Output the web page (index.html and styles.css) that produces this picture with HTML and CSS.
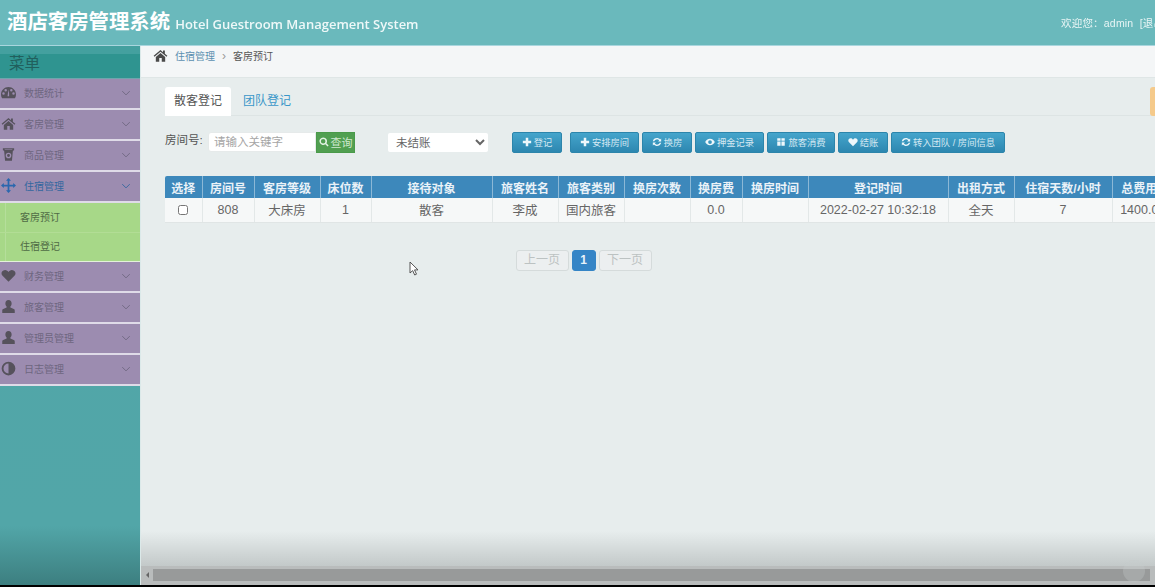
FILE: index.html
```html
<!DOCTYPE html>
<html lang="zh">
<head>
<meta charset="utf-8">
<title>酒店客房管理系统</title>
<link rel="stylesheet" href="styles.css">
</head>
<body>
<svg class="defs" width="0" height="0" aria-hidden="true">
  <symbol id="i-home" viewBox="0 0 24 24"><path d="M12 3 1 12.500l1.400 1.600L12 6l9.600 8.100 1.400-1.600-4-3.400V4h-3v2.600zM4.500 14.500V22h5.500v-6h4v6h5.500v-7.500L12 8z"/></symbol>
  <symbol id="i-gauge" viewBox="0 0 24 24"><path fill-rule="evenodd" d="M12 3C5.400 3 0 8.400 0 15c0 2.300.6 4.300 1.700 6h20.600c1.100-1.700 1.700-3.700 1.700-6 0-6.600-5.400-12-12-12zM4 15.500a2 2 0 1 1 0-4 2 2 0 0 1 0 4zm3.500-5a2 2 0 1 1 0-4 2 2 0 0 1 0 4zM13 18h-2.500l.5-4 1-7 1 7zm3.500-7.500a2 2 0 1 1 0-4 2 2 0 0 1 0 4zm3.500 5a2 2 0 1 1 0-4 2 2 0 0 1 0 4z"/></symbol>
  <symbol id="i-cup" viewBox="0 0 24 24"><path fill-rule="evenodd" d="M3 2h18v3l-2 1-1.500 16h-11L5 6 3 5zm9 7a4.500 4.500 0 1 0 0 9 4.500 4.500 0 0 0 0-9zm0 2.200a2.300 2.300 0 1 1 0 4.600 2.300 2.300 0 0 1 0-4.600zM6 3.500v1h12v-1z"/></symbol>
  <symbol id="i-move" viewBox="0 0 24 24"><path d="M12 0l4 4.500h-2.600v6.100h6.100V8l4.500 4-4.500 4v-2.600h-6.100v6.100H16L12 24l-4-4.500h2.600v-6.100H4.500V16L0 12l4.500-4v2.600h6.100V4.500H8z"/></symbol>
  <symbol id="i-heart" viewBox="0 0 24 24"><path d="M12 22 2.500 12.500C-.5 9.500.2 3.500 6.500 3 9 3 11 4.500 12 6.500 13 4.500 15 3 17.500 3c6.300.5 7 6.500 4 9.500z"/></symbol>
  <symbol id="i-user" viewBox="0 0 24 24"><path d="M12 1.500c-3.200 0-5 2.500-5 5.500 0 2 .8 3.800 2 4.900V13.500L3.500 16c-1.300.6-1.500 1.700-1.500 3v3.500h20V19c0-1.300-.2-2.400-1.500-3L15 13.500v-1.600c1.200-1.100 2-2.900 2-4.900 0-3-1.800-5.500-5-5.500z"/></symbol>
  <symbol id="i-adjust" viewBox="0 0 24 24"><path fill-rule="evenodd" d="M12 1a11 11 0 1 0 0 22 11 11 0 0 0 0-22zm0 3v16a8 8 0 0 1 0-16z"/></symbol>
  <symbol id="i-plus" viewBox="0 0 24 24"><path d="M9 2h6v7h7v6h-7v7H9v-7H2V9h7z"/></symbol>
  <symbol id="i-refresh" viewBox="0 0 24 24"><path d="M12 2.500c3 0 5.600 1.300 7.400 3.400L22 3.500V11h-7.500l2.700-2.700A7 7 0 0 0 5.300 10H1.900A10.400 10.400 0 0 1 12 2.500zM2 13h7.500l-2.700 2.700A7 7 0 0 0 18.700 14h3.400A10.400 10.400 0 0 1 4.600 18.100L2 20.500z"/></symbol>
  <symbol id="i-eye" viewBox="0 0 24 24"><path fill-rule="evenodd" d="M12 4C6.500 4 2.500 8 .5 12c2 4 6 8 11.500 8s9.500-4 11.500-8c-2-4-6-8-11.500-8zm0 3.500a4.500 4.500 0 1 1 0 9 4.500 4.500 0 0 1 0-9z"/></symbol>
  <symbol id="i-gift" viewBox="0 0 24 24"><path d="M3 3h8v6H3zM13 3h8v6h-8zM3 11h8v10H3zM13 11h8v10h-8z"/></symbol>
  <symbol id="i-search" viewBox="0 0 24 24"><path fill-rule="evenodd" d="M10 1a9 9 0 1 0 5.200 16.400l5.300 5.300 2.600-2.600-5.300-5.300A9 9 0 0 0 10 1zm0 3.500a5.500 5.500 0 1 1 0 11 5.500 5.500 0 0 1 0-11z"/></symbol>
  <symbol id="i-chev" viewBox="0 0 12 8"><path d="M1 1.500 6 6.500 11 1.500" fill="none" stroke="currentColor" stroke-width="1.200"/></symbol>
</svg>

<div class="page">
  <header class="topbar">
    <h1 class="brand">酒店客房管理系统</h1>
    <span class="brand-en">Hotel Guestroom Management System</span>
    <div class="user">欢迎您：admin &nbsp;[退出]</div>
  </header>

  <div class="body">
    <aside class="sidebar">
      <div class="menu-title"><span>菜单</span></div>
      <nav class="menu">
        <a class="item"><svg class="ico"><use href="#i-gauge"/></svg><span>数据统计</span><svg class="chev"><use href="#i-chev"/></svg></a>
        <a class="item"><svg class="ico"><use href="#i-home"/></svg><span>客房管理</span><svg class="chev"><use href="#i-chev"/></svg></a>
        <a class="item"><svg class="ico"><use href="#i-cup"/></svg><span>商品管理</span><svg class="chev"><use href="#i-chev"/></svg></a>
        <a class="item active"><svg class="ico"><use href="#i-move"/></svg><span>住宿管理</span><svg class="chev"><use href="#i-chev"/></svg></a>
        <div class="sub">
          <a class="sub-item">客房预订</a>
          <a class="sub-item">住宿登记</a>
        </div>
        <a class="item"><svg class="ico"><use href="#i-heart"/></svg><span>财务管理</span><svg class="chev"><use href="#i-chev"/></svg></a>
        <a class="item"><svg class="ico"><use href="#i-user"/></svg><span>旅客管理</span><svg class="chev"><use href="#i-chev"/></svg></a>
        <a class="item"><svg class="ico"><use href="#i-user"/></svg><span>管理员管理</span><svg class="chev"><use href="#i-chev"/></svg></a>
        <a class="item"><svg class="ico"><use href="#i-adjust"/></svg><span>日志管理</span><svg class="chev"><use href="#i-chev"/></svg></a>
      </nav>
    </aside>

    <main class="main">
      <div class="crumbs">
        <svg class="crumb-home"><use href="#i-home"/></svg>
        <a class="crumb-link">住宿管理</a>
        <span class="crumb-sep">›</span>
        <span class="crumb-cur">客房预订</span>
      </div>

      <div class="content">
        <div class="tabs">
          <a class="tab on">散客登记</a>
          <a class="tab">团队登记</a>
          <span class="tab-flag"></span>
        </div>

        <div class="toolbar">
          <label class="lbl">房间号:</label>
          <div class="search">
            <input class="kw" type="text" placeholder="请输入关键字">
            <button class="go"><svg class="bi"><use href="#i-search"/></svg>查询</button>
          </div>
          <select class="sel"><option>未结账</option></select>
          <div class="actions">
            <button class="btn first"><svg class="bi"><use href="#i-plus"/></svg>登记</button>
            <button class="btn w69"><svg class="bi"><use href="#i-plus"/></svg>安排房间</button>
            <button class="btn"><svg class="bi"><use href="#i-refresh"/></svg>换房</button>
            <button class="btn w69"><svg class="bi"><use href="#i-eye"/></svg>押金记录</button>
            <button class="btn w68"><svg class="bi"><use href="#i-gift"/></svg>旅客消费</button>
            <button class="btn"><svg class="bi"><use href="#i-heart"/></svg>结账</button>
            <button class="btn w114"><svg class="bi"><use href="#i-refresh"/></svg>转入团队 / 房间信息</button>
          </div>
        </div>

        <div class="table-wrap">
          <table class="grid">
            <colgroup>
              <col class="c37"><col class="c52"><col class="c66"><col class="c51"><col class="c121"><col class="c66"><col class="c66"><col class="c66"><col class="c52"><col class="c66"><col class="c140"><col class="c66"><col class="c98"><col class="c54">
            </colgroup>
            <thead>
              <tr><th>选择</th><th>房间号</th><th>客房等级</th><th>床位数</th><th>接待对象</th><th>旅客姓名</th><th>旅客类别</th><th>换房次数</th><th>换房费</th><th>换房时间</th><th>登记时间</th><th>出租方式</th><th>住宿天数/小时</th><th>总费用</th></tr>
            </thead>
            <tbody>
              <tr><td><input class="chk" type="checkbox"></td><td>808</td><td>大床房</td><td>1</td><td>散客</td><td>李成</td><td>国内旅客</td><td></td><td>0.0</td><td></td><td>2022-02-27 10:32:18</td><td>全天</td><td>7</td><td>1400.0</td></tr>
            </tbody>
          </table>
        </div>

        <div class="pager">
          <a class="pg">上一页</a>
          <a class="pg cur">1</a>
          <a class="pg">下一页</a>
        </div>

        <svg class="cursor" viewBox="0 0 10 15"><path d="M1 1v11l2.700-2.400 2 4.400 1.800-.8-2-4.300H9z" fill="#fff" stroke="#444" stroke-width=".9"/></svg>
      </div>

      <div class="hscroll">
        <span class="arrow"></span>
        <span class="thumb"></span>
        <span class="knob"></span>
      </div>
    </main>
  </div>
  <div class="strip"></div>
</div>
</body>
</html>
```

FILE: styles.css
```css
* { box-sizing: border-box; }
html, body { margin: 0; height: 100%; overflow: hidden; background: #000; }
body { font-family: "Liberation Sans", "Noto Sans CJK SC", sans-serif; color: #555; }
.defs { position: absolute; }
.page { width: 1155px; height: 587px; display: flex; flex-direction: column; overflow: hidden; filter: blur(.35px); }

/* top bar */
.topbar { height: 46px; flex: none; display: flex; align-items: center; background: #6ab9bc; color: #fff; padding: 0 0 2px 7px; border-bottom: 1px solid #a9d6de; }
.brand { margin: 0; font-size: 20.400px; line-height: 42px; font-weight: 700; white-space: nowrap; }
.brand-en { margin-left: 5px; font-family: "Open Sans", sans-serif; font-size: 13px; font-weight: 600; color: #eef8f8; white-space: nowrap; position: relative; top: 2px; }
.user { margin-left: auto; width: 94px; overflow: hidden; white-space: nowrap; font-size: 10.500px; color: #e8f5f5; letter-spacing: .2px; position: relative; top: 1px; }

.body { flex: 1; min-height: 0; display: flex; }

/* sidebar */
.sidebar { width: 141px; flex: none; background: linear-gradient(#50a6a8 0, #52a6a8 480px, #3c7e7f 540px); border-right: 1px solid #dbe9e9; }
.menu-title { height: 33px; padding-top: 8px; background: linear-gradient(#44a09f 0 8px, #2f9490 8px); border-bottom: 1px solid #6fa5ad; font-size: 15.500px; color: #215f5d; }
.menu-title span { display: block; padding-left: 9px; line-height: 19px; }
.menu { display: flex; flex-direction: column; }
.item { height: 31px; padding-bottom: 2px; display: flex; align-items: center; background: #9c8cb0; border-bottom: 2px solid #dfdbe8; color: #6e6680; font-size: 10px; }
.item span { margin-left: 8px; }
.ico { width: 15px; height: 15px; margin-left: 1px; fill: #56525c; flex: none; }
.chev { width: 10px; height: 6px; margin-left: auto; margin-right: 9px; color: #6e6680; flex: none; }
.item.active { color: #33679f; }
.item.active .ico { fill: #2a67ae; }
.item.active .chev { color: #33679f; }
.sub { height: 59px; display: flex; flex-direction: column; background: linear-gradient(90deg, transparent 5px, #b5de9b 5px 6px, transparent 6px), #a7d888; border-bottom: 1px solid #e4f2da; }
.sub-item { height: 29px; line-height: 29px; padding-left: 20px; font-size: 10px; color: #4f6b45; }
.sub-item + .sub-item { border-top: 1px solid #b2dd95; line-height: 27px; }

/* main */
.main { flex: 1; min-width: 0; display: flex; flex-direction: column; background: linear-gradient(#e7eded 0, #e7eded 485px, #c3c9c9 520px); }
.crumbs { height: 32px; flex: none; display: flex; align-items: center; padding: 0 0 12px 12px; background: #f4f6f7; border-bottom: 1px solid #dfe6e6; font-size: 10px; }
.crumb-home { width: 15px; height: 15px; fill: #4a4a4a; }
.crumb-link { margin-left: 7px; color: #5b8fb0; }
.crumb-sep { margin: 0 7px; color: #999; font-size: 12px; line-height: 10px; }
.crumb-cur { color: #555; }

.content { flex: 1; min-height: 0; position: relative; padding: 9px 0 0 24px; overflow: hidden; }
.tabs { height: 29px; display: flex; position: relative; border-bottom: 1px solid #dde4e4; }
.tab { height: 29px; padding: 0 9px; margin-right: 3px; line-height: 29px; font-size: 12px; color: #3a97c9; }
.tab.on { width: 66px; background: #fff; color: #555; border-radius: 3px 3px 0 0; }
.tab-flag { position: absolute; right: 0; top: 0; width: 5px; height: 29px; background: #f5ca8b; border-radius: 3px 0 0 3px; }

.toolbar { height: 21px; margin-top: 16px; display: flex; align-items: flex-start; }
.lbl { width: 43px; font-size: 11.500px; line-height: 16px; color: #555; }
.search { display: flex; width: 147px; }
.kw { width: 108px; height: 20px; padding: 0 5px; border: 1px solid #e6eaea; border-radius: 3px 0 0 3px; background: #fff; font: 11.500px "Liberation Sans", "Noto Sans CJK SC", sans-serif; outline: 0; }
.kw::placeholder { color: #a5a5a5; opacity: 1; }
.go { width: 39px; height: 21px; padding: 0 0 2px; display: flex; align-items: center; justify-content: center; gap: 2px; border: 1px solid #4a9a4a; background: #519f51; color: #cfe8cf; font: 11px "Liberation Sans", "Noto Sans CJK SC", sans-serif; }
.sel { width: 100px; height: 19px; margin: 1px 0 0 33px; padding: 0 4px; border: 0; border-radius: 2px; background: #fff; color: #666; font: 11.500px "Liberation Sans", "Noto Sans CJK SC", sans-serif; outline: 0; }
.actions { display: flex; margin-left: 24px; gap: 3px; }
.btn { width: 50px; height: 21px; padding: 0 0 1px; display: flex; align-items: center; justify-content: center; gap: 2px; border: 1px solid #2c85ab; border-radius: 2px; background: linear-gradient(#45a5cc, #2d87b0); color: #d4e8f2; font: 9.300px "Liberation Sans", "Noto Sans CJK SC", sans-serif; white-space: nowrap; }
.btn.first { margin-right: 5px; }
.btn.w69 { width: 69px; }
.btn.w68 { width: 68px; }
.btn.w114 { width: 114px; }
.bi { width: 10px; height: 10px; fill: #eef7fb; flex: none; }
.go .bi { fill: #e4f3e4; }

.table-wrap { margin-top: 23px; overflow: hidden; }
.grid { width: 1001px; table-layout: fixed; border-collapse: collapse; font-size: 12px; }
.c37 { width: 37px; } .c51 { width: 51px; } .c52 { width: 52px; } .c54 { width: 54px; } .c66 { width: 66px; } .c98 { width: 98px; } .c121 { width: 121px; } .c140 { width: 140px; }
.grid th { height: 22px; padding: 0; background: #3d88bb; color: #eaf2f8; font-weight: 700; border-left: 1px solid #8cb8d6; white-space: nowrap; }
.grid th:first-child { border-left: 0; border-radius: 2px 0 0 0; }
.grid td { height: 24px; padding: 0; background: #f6f8f8; color: #666; font-size: 12.500px; text-align: center; border-left: 1px solid #e3e8e8; border-bottom: 1px solid #e0e5e5; white-space: nowrap; }
.grid td:first-child { border-left: 0; }
.chk { width: 10px; height: 10px; margin: 0; vertical-align: middle; }

.pager { display: flex; justify-content: center; gap: 3px; margin-top: 27px; width: 837px; }
.pg { width: 53px; height: 21px; line-height: 19px; text-align: center; font-size: 12px; color: #bcc2c2; border: 1px solid #d5dbdb; border-radius: 3px; background: #eceff0; }
.pg.cur { width: 24px; background: #3585c6; border-color: #3585c6; color: #e8f2fa; font-weight: 700; }

.cursor { position: absolute; left: 268px; top: 183px; width: 10px; height: 15px; }

.hscroll { height: 19px; flex: none; display: flex; align-items: center; position: relative; padding: 0 5px 2px 5px; background: #b9bcbc; }
.arrow { width: 0; height: 0; border: 3px solid transparent; border-right: 3px solid #666; border-left: 0; }
.thumb { margin-left: 4px; height: 12px; flex: 1; background: #989a9a; }
.knob { position: absolute; right: 10px; top: -6px; width: 22px; height: 22px; border-radius: 50%; background: rgba(200, 204, 204, .3); }

.strip { height: 2px; flex: none; background: #000; }
```
